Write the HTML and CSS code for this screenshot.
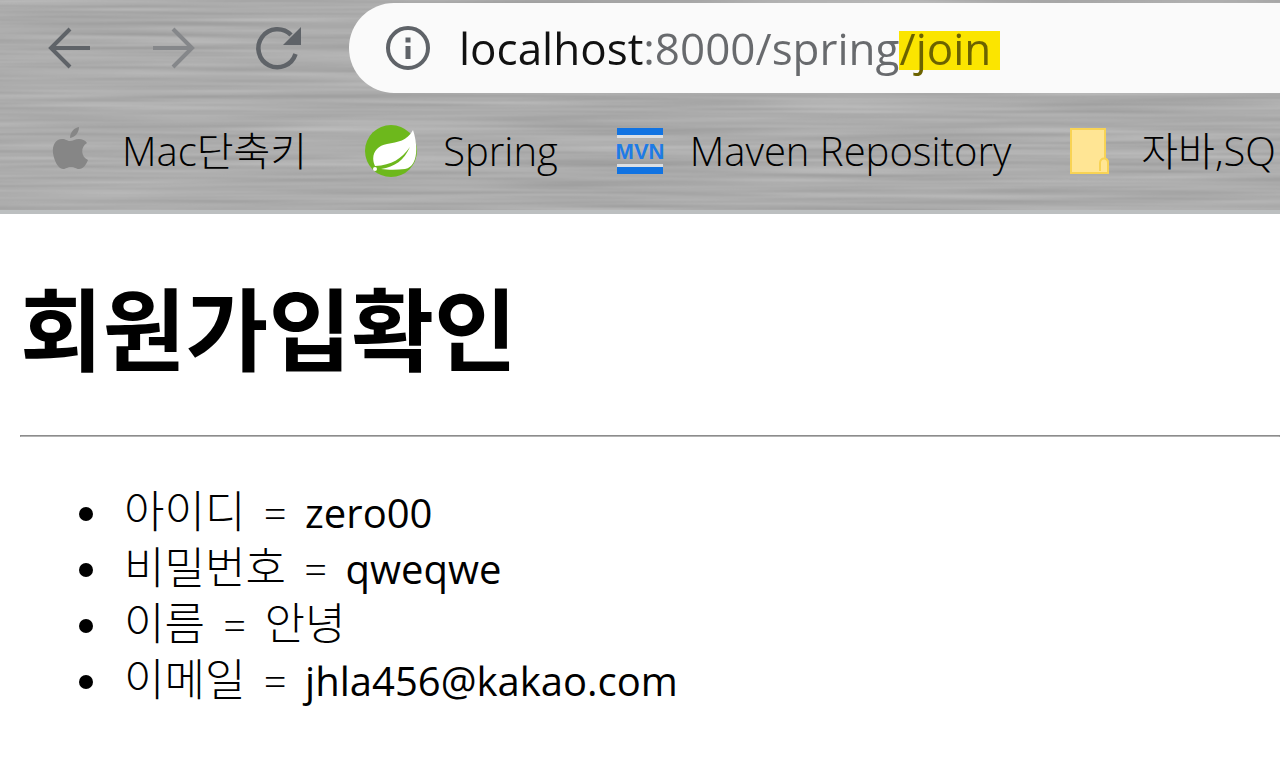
FILE: index.html
```html
<!DOCTYPE html>
<html lang="ko">
<head>
  <meta charset="UTF-8">
  <meta name="viewport" content="width=device-width, initial-scale=1">
  <title>회원가입확인</title>
  <link rel="stylesheet" href="styles.css">
</head>
<body>

  <header class="browser">
    <!-- brushed metal -->
    <svg class="metal" aria-hidden="true">
      <filter id="brushed" x="0" y="0" width="100%" height="100%" color-interpolation-filters="sRGB">
        <feTurbulence type="fractalNoise" baseFrequency="0.004 0.18" numOctaves="2" seed="4"/>
        <feColorMatrix values="0.16 0 0 0 0.595  0.16 0 0 0 0.595  0.16 0 0 0 0.595  0 0 0 0 1"/>
      </filter>
      <rect width="100%" height="100%" filter="url(#brushed)"/>
    </svg>

    <div class="toolbar">
      <button class="nav-btn" type="button" aria-label="뒤로">
        <svg width="48" height="48" viewBox="0 0 48 48" fill="none" stroke="#5f6368" stroke-width="4">
          <path d="M44 24H5M24 5L5 24l19 19"/>
        </svg>
      </button>
      <button class="nav-btn" type="button" aria-label="앞으로" disabled>
        <svg width="48" height="48" viewBox="0 0 48 48" fill="none" stroke="#85878a" stroke-width="4">
          <path d="M3 24h39M23 5l19 19-19 19"/>
        </svg>
      </button>
      <button class="nav-btn" type="button" aria-label="새로고침">
        <svg width="48" height="48" viewBox="0 0 48 48">
          <path d="M41.500 30A19 19 0 1 1 37 11" fill="none" stroke="#5f6368" stroke-width="4.500"/>
          <path d="M47 3v18H29z" fill="#5f6368"/>
        </svg>
      </button>

      <div class="address">
        <svg class="info" width="46" height="46" viewBox="0 0 46 46">
          <circle cx="23" cy="23" r="20" fill="none" stroke="#5f6368" stroke-width="4"/>
          <path d="M20.500 12.500h5v5h-5zM20.500 21h5v13h-5z" fill="#5f6368"/>
        </svg>
        <input class="url" type="text" value="localhost:8000/spring/join" aria-label="주소창" spellcheck="false">
      </div>
    </div>

    <nav class="bookmarks">
      <a class="bookmark" href="#">
        <svg width="50" height="52" viewBox="2 0 50 52" fill="#868686">
          <path d="M26 13c0-6 4-10 9-11 0 6-4 10-9 11z"/>
          <path d="M26 16c3 0 5-2 9-2 3 0 6 1 8 4-7 4-6 14 1 17-2 5-5 9-9 9-3 0-4-2-8-2s-5 2-8 2c-5 0-9-9-10-16-1-8 3-14 9-14 4 0 5 2 8 2z"/>
        </svg>
        <span>Mac단축키</span>
      </a>
      <a class="bookmark" href="#">
        <svg width="52" height="52" viewBox="0 0 52 52">
          <circle cx="26" cy="26" r="26" fill="#6db81c"/>
          <path d="M48 5c6 18 4 37-8 39-8 1-17 1-24 0 14-2 23-9 29-22-9 12-18 18-35 19C5 30 11 21 22 19c11-2 20-3 26-14z" fill="#fff"/>
          <circle cx="10" cy="44" r="2" fill="#fff"/>
        </svg>
        <span>Spring</span>
      </a>
      <a class="bookmark" href="#">
        <svg width="48" height="48" viewBox="0 0 48 48">
          <path d="M1 8h46v3H1zM1 37h46v3H1z" fill="#dcdfe3"/>
          <path d="M1 1h46v7H1zM1 40h46v7H1z" fill="#1173e2"/>
          <text class="mvn" x="24" y="32" text-anchor="middle">MVN</text>
        </svg>
        <span>Maven Repository</span>
      </a>
      <a class="bookmark" href="#">
        <svg width="46" height="48" viewBox="0 0 46 48" fill="#ffe594" stroke="#f8d354" stroke-width="2">
          <path d="M2 2h34v30c2 0 3 2 3 4v10H2z"/>
          <path d="M31 44V36c0-6 8-6 8 0v10h-8"/>
        </svg>
        <span>자바,SQ</span>
      </a>
    </nav>
  </header>

  <main class="page">
    <h1>회원가입확인</h1>
    <hr>
    <ul>
      <li><span class="label">아이디</span> <span class="eq">=</span> zero00</li>
      <li><span class="label">비밀번호</span> <span class="eq">=</span> qweqwe</li>
      <li><span class="label">이름</span> <span class="eq">=</span> <span class="label">안녕</span></li>
      <li><span class="label">이메일</span> <span class="eq">=</span> jhla456@kakao.com</li>
    </ul>
  </main>

</body>
</html>
```
FILE: styles.css
```css
* {
  box-sizing: border-box;
}

body {
  margin: 0;
  background: #fff;
  color: #000;
  font-family: 'Open Sans', 'Noto Sans CJK KR', sans-serif;
  overflow-x: hidden;
}

/* Browser bar */
.browser {
  position: relative;
  overflow: hidden;
  padding-top: 3px;
  background: #a9a9a9;
  border-bottom: 4px solid #bcbfc0;
}

.metal {
  position: absolute;
  inset: 0;
  width: 100%;
  height: 100%;
}

.toolbar,
.bookmarks {
  position: relative;
  display: flex;
  align-items: center;
}

.toolbar {
  gap: 56px;
  padding-left: 46px;
}

.nav-btn {
  flex: none;
  display: flex;
  padding: 0;
  border: none;
  background: none;
}

.address {
  flex: 1;
  display: flex;
  align-items: center;
  gap: 28px;
  height: 90px;
  margin-left: -9px;
  padding-left: 36px;
  background: #fafafa;
  border-radius: 45px 0 0 45px;
}

.info {
  flex: none;
}

/* host in black, path in grey, last part marked */
.url {
  flex: 1;
  min-width: 0;
  height: 62px;
  padding: 0;
  border: none;
  outline: none;
  font: 400 44px 'Open Sans', sans-serif;
  color: transparent;
  background:
    linear-gradient(90deg, #111 185px, #686a6d 185px 440px, #6b6200 440px) text,
    linear-gradient(#fbe500, #fbe500) 440px 14px / 101px 39px no-repeat;
}

.bookmarks {
  gap: 58px;
  padding: 32px 0 33px 46px;
}

.bookmark {
  flex: none;
  display: flex;
  align-items: center;
  gap: 26px;
  color: #000;
  font-size: 40px;
  font-weight: 300;
  line-height: 52px;
  text-decoration: none;
  white-space: nowrap;
}

.mvn {
  font: 700 22px 'Liberation Sans', sans-serif;
  fill: #1e7be6;
}

/* Page */
.page {
  padding: 0 0 0 20px;
}

h1 {
  margin: 52px 0 51px;
  font-family: 'Noto Sans CJK KR', sans-serif;
  font-size: 90px;
  font-weight: 700;
  line-height: 118px;
}

hr {
  margin: 0;
  border: 1px solid #8c8c8c;
  border-bottom-color: #b4b4b4;
}

ul {
  margin: 48px 0;
  padding-left: 94px;
}

li {
  padding-left: 10px;
  font-size: 40px;
  line-height: 56px;
}

.label {
  font-family: 'Noto Sans CJK KR', sans-serif;
  font-size: 44px;
  font-weight: 300;
  line-height: 48px;
}

.eq {
  margin: 0 8px;
  font-weight: 300;
}
```
